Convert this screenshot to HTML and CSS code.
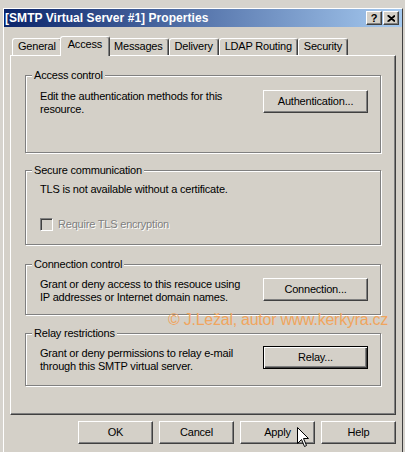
FILE: index.html
```html
<!DOCTYPE html>
<html>
<head>
<meta charset="utf-8">
<link rel="stylesheet" href="styles.css">
</head>
<body>
<div class="window">
  <div class="titlebar">
    <span class="title">[SMTP Virtual Server #1] Properties</span>
    <div class="caption-btns">
      <span class="cbtn help">?</span>
      <span class="cbtn close"><svg width="8" height="7" viewBox="0 0 8 7"><path d="M0.5 0.5 L7.5 6.5 M1.5 0.5 L8.5 6.5 M7.5 0.5 L0.5 6.5 M8.5 0.5 L1.5 6.5" stroke="#000" stroke-width="1.1" fill="none"/></svg></span>
    </div>
  </div>
  <div class="client">
    <div class="tabs">
      <div class="tab">General</div>
      <div class="tab active">Access</div>
      <div class="tab">Messages</div>
      <div class="tab">Delivery</div>
      <div class="tab">LDAP Routing</div>
      <div class="tab">Security</div>
    </div>
    <div class="panel">
      <fieldset class="group g-access">
        <legend>Access control</legend>
        <div class="row">
          <p class="desc">Edit the authentication methods for this<br>resource.</p>
          <button class="btn wide">Authentication...</button>
        </div>
      </fieldset>
      <fieldset class="group g-secure">
        <legend>Secure communication</legend>
        <div class="stack">
          <p class="desc">TLS is not available without a certificate.</p>
          <div class="check">
            <span class="checkbox"></span>
            <span class="disabled">Require TLS encryption</span>
          </div>
        </div>
      </fieldset>
      <fieldset class="group g-conn">
        <legend>Connection control</legend>
        <div class="row">
          <p class="desc">Grant or deny access to this resouce using<br>IP addresses or Internet domain names.</p>
          <button class="btn wide">Connection...</button>
        </div>
      </fieldset>
      <fieldset class="group g-relay">
        <legend>Relay restrictions</legend>
        <div class="row">
          <p class="desc shift">Grant or deny permissions to relay e-mail<br>through this SMTP virtual server.</p>
          <button class="btn wide default">Relay...</button>
        </div>
      </fieldset>
      <div class="watermark">© J.Ležal, autor www.kerkyra.cz</div>
    </div>
    <div class="actions">
      <button class="btn">OK</button>
      <button class="btn">Cancel</button>
      <button class="btn apply">Apply<svg class="cursor" width="13" height="21" viewBox="0 0 13 21"><path d="M0.5 0.5 L0.5 16.5 L4.5 12.5 L7.5 19.5 L9.5 18.5 L6.5 11.5 L11.5 11.5 Z" fill="#fff" stroke="#000" stroke-width="1"/></svg></button>
      <button class="btn">Help</button>
    </div>
  </div>
</div>
</body>
</html>
```

FILE: styles.css
```css
* {
  box-sizing: border-box;
}

html,
body {
  margin: 0;
}

body {
  width: 405px;
  height: 452px;
  overflow: hidden;
  background: #d6d3cd;
  font-family: "Liberation Sans", Arial, sans-serif;
  font-size: 11px;
  letter-spacing: -0.2px;
  color: #000;
}

.window {
  margin: 8px 0 0 3px;
  width: 400px;
  height: 460px;
  background: #d4d0c8;
  border-left: 1px solid #fff;
  border-top: 1px solid #fff;
  border-right: 1px solid #404040;
}

.titlebar {
  height: 18px;
  display: flex;
  align-items: center;
  padding: 0 3px 0 1px;
  background: linear-gradient(to right, #0a246a, #a6caf0);
}

.title {
  flex: 1;
  color: #fff;
  font-weight: bold;
  font-size: 12px;
  line-height: 18px;
  letter-spacing: 0.05px;
  white-space: nowrap;
}

.caption-btns {
  display: flex;
  gap: 1px;
}

.cbtn {
  width: 16px;
  height: 14px;
  display: flex;
  align-items: center;
  justify-content: center;
  background: #d4d0c8;
  border: 1px solid;
  border-color: #fff #404040 #404040 #fff;
  box-shadow: inset -1px -1px 0 #808080;
  font-weight: bold;
  font-size: 11px;
  line-height: 1;
  letter-spacing: 0;
}

.client {
  padding: 9px 6px 0 6px;
}

.tabs {
  display: flex;
  align-items: flex-end;
  height: 19px;
  padding-left: 2px;
}

.tab {
  height: 17px;
  padding: 1px 5px 0 5px;
  line-height: 13px;
  white-space: nowrap;
  background: #d4d0c8;
  border-top: 1px solid #fff;
  border-left: 1px solid #fff;
  border-right: 1px solid #404040;
  box-shadow: inset -1px 0 0 #808080;
  border-radius: 3px 3px 0 0;
}

.tab.active {
  position: relative;
  z-index: 1;
  height: 20px;
  margin: 0 -2px -1px -2px;
  padding: 1px 7px 0 7px;
}

.panel {
  position: relative;
  height: 360px;
  padding: 13px 14px 0 14px;
  border: 1px solid;
  border-color: #fff #404040 #404040 #fff;
  box-shadow: inset -1px -1px 0 #808080;
}

.group {
  margin: 0;
  padding: 0;
  min-width: 0;
  border: 1px solid #808080;
  box-shadow: 1px 1px 0 #fff, inset 1px 1px 0 #fff;
}

.group legend {
  margin-left: 6px;
  padding: 0 2px;
  line-height: 13px;
  background: #d4d0c8;
}

.g-access {
  height: 84px;
}

.g-secure {
  height: 81px;
  margin-top: 11px;
}

.g-conn {
  height: 57px;
  margin-top: 13px;
}

.g-relay {
  height: 59px;
  margin-top: 12px;
}

.row {
  display: flex;
  justify-content: space-between;
  align-items: flex-start;
  padding: 0 12px 0 14px;
}

.g-access .row {
  padding-top: 8px;
}

.g-conn .row {
  padding-top: 7px;
}

.g-relay .row {
  padding-top: 6px;
}

.stack {
  padding: 6px 12px 0 14px;
}

.desc {
  margin: 0;
  line-height: 13px;
  white-space: nowrap;
}

.desc.shift {
  margin-top: 1px;
}

.check {
  display: flex;
  align-items: center;
  gap: 5px;
  height: 13px;
  margin-top: 22px;
  line-height: 13px;
}

.checkbox {
  width: 13px;
  height: 13px;
  background: #d4d0c8;
  border: 1px solid;
  border-color: #808080 #fff #fff #808080;
  box-shadow: inset 1px 1px 0 #404040, inset -1px -1px 0 #d4d0c8;
}

.disabled {
  color: #808080;
  text-shadow: 1px 1px 0 #fff;
}

.btn {
  position: relative;
  width: 75px;
  height: 23px;
  padding: 0;
  font: inherit;
  letter-spacing: inherit;
  line-height: 13px;
  color: #000;
  background: #d4d0c8;
  border: 1px solid;
  border-color: #fff #404040 #404040 #fff;
  box-shadow: inset -1px -1px 0 #808080;
}

.btn.wide {
  width: 105px;
  flex: none;
}

.btn.default {
  border-color: #000;
  box-shadow: inset 1px 1px 0 #fff, inset -1px -1px 0 #404040, inset -2px -2px 0 #808080;
}

.watermark {
  position: absolute;
  left: 157px;
  top: 256px;
  font-size: 16px;
  line-height: 16px;
  letter-spacing: -0.25px;
  color: #f0a55e;
  white-space: nowrap;
}

.actions {
  display: flex;
  justify-content: flex-end;
  gap: 6px;
  margin-top: 6px;
}

.cursor {
  position: absolute;
  left: 56px;
  top: 5px;
}
```
